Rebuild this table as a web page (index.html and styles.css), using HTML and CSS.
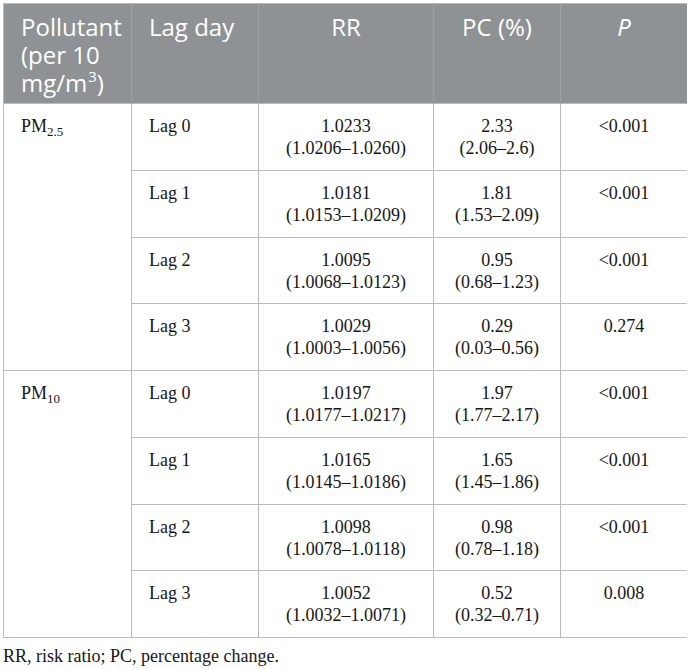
FILE: index.html
```html
<!doctype html>
<html lang="en">
<head>
<meta charset="utf-8">
<title>RR and PC per 10 mg/m3 increase</title>
<meta name="viewport" content="width=device-width,initial-scale=1">
<link rel="stylesheet" href="styles.css">
</head>
<body>
<table class="results">
  <colgroup>
    <col class="c-pol">
    <col class="c-lag">
    <col class="c-rr">
    <col class="c-pc">
    <col class="c-p">
  </colgroup>
  <thead>
    <tr>
      <th class="left">Pollutant (per 10 mg/m<sup>3</sup>)</th>
      <th class="left">Lag day</th>
      <th>RR</th>
      <th>PC (%)</th>
      <th><i>P</i></th>
    </tr>
  </thead>
  <tbody>
    <tr class="group">
      <td rowspan="4" class="left">PM<sub>2.5</sub></td>
      <td class="left">Lag 0</td>
      <td>1.0233<br>(1.0206–1.0260)</td>
      <td>2.33<br>(2.06–2.6)</td>
      <td>&lt;0.001</td>
    </tr>
    <tr>
      <td class="left">Lag 1</td>
      <td>1.0181<br>(1.0153–1.0209)</td>
      <td>1.81<br>(1.53–2.09)</td>
      <td>&lt;0.001</td>
    </tr>
    <tr>
      <td class="left">Lag 2</td>
      <td>1.0095<br>(1.0068–1.0123)</td>
      <td>0.95<br>(0.68–1.23)</td>
      <td>&lt;0.001</td>
    </tr>
    <tr>
      <td class="left">Lag 3</td>
      <td>1.0029<br>(1.0003–1.0056)</td>
      <td>0.29<br>(0.03–0.56)</td>
      <td>0.274</td>
    </tr>
    <tr class="group">
      <td rowspan="4" class="left">PM<sub>10</sub></td>
      <td class="left">Lag 0</td>
      <td>1.0197<br>(1.0177–1.0217)</td>
      <td>1.97<br>(1.77–2.17)</td>
      <td>&lt;0.001</td>
    </tr>
    <tr>
      <td class="left">Lag 1</td>
      <td>1.0165<br>(1.0145–1.0186)</td>
      <td>1.65<br>(1.45–1.86)</td>
      <td>&lt;0.001</td>
    </tr>
    <tr>
      <td class="left">Lag 2</td>
      <td>1.0098<br>(1.0078–1.0118)</td>
      <td>0.98<br>(0.78–1.18)</td>
      <td>&lt;0.001</td>
    </tr>
    <tr>
      <td class="left">Lag 3</td>
      <td>1.0052<br>(1.0032–1.0071)</td>
      <td>0.52<br>(0.32–0.71)</td>
      <td>0.008</td>
    </tr>
  </tbody>
</table>
<p class="foot">RR, risk ratio; PC, percentage change.</p>
</body>
</html>
```

FILE: styles.css
```css
body {
  margin: 3px;
  background: #fff;
  color: #161616;
  font-family: "Liberation Serif", "Times New Roman", serif;
}
.results {
  width: 684px;
  border-collapse: collapse;
  table-layout: fixed;
  border: 1px solid #b7bdba;
}
.c-pol { width: 128px; }
.c-lag { width: 127px; }
.c-rr  { width: 175px; }
.c-pc  { width: 127px; }
.c-p   { width: 127px; }

th {
  background: #8e9294;
  color: #fff;
  font-family: "Open Sans", "Noto Sans", sans-serif;
  font-weight: 400;
  font-size: 24px;
  line-height: 28px;
  text-align: center;
  vertical-align: top;
  padding: 9px 8px 6px;
  border-left: 1px solid #9ea2a4;
}
th:first-child { border-left: none; }
th sup { font-size: 15px; line-height: 1; vertical-align: 10px; margin-left: 1px; }
th i { font-style: italic; }

td {
  font-size: 18px;
  line-height: 22px;
  text-align: center;
  vertical-align: top;
  padding: 11px 10px 10.75px;
  border: 1px solid #bcbcbc;
}
th.left, td.left { text-align: left; padding-left: 17px; }
td sub { font-size: 13px; line-height: 0; vertical-align: -4px; }
tr.group td { border-top-color: #b7bdba; }

.foot {
  margin: 7px 0 0;
  font-size: 18px;
  line-height: 22px;
}
```
